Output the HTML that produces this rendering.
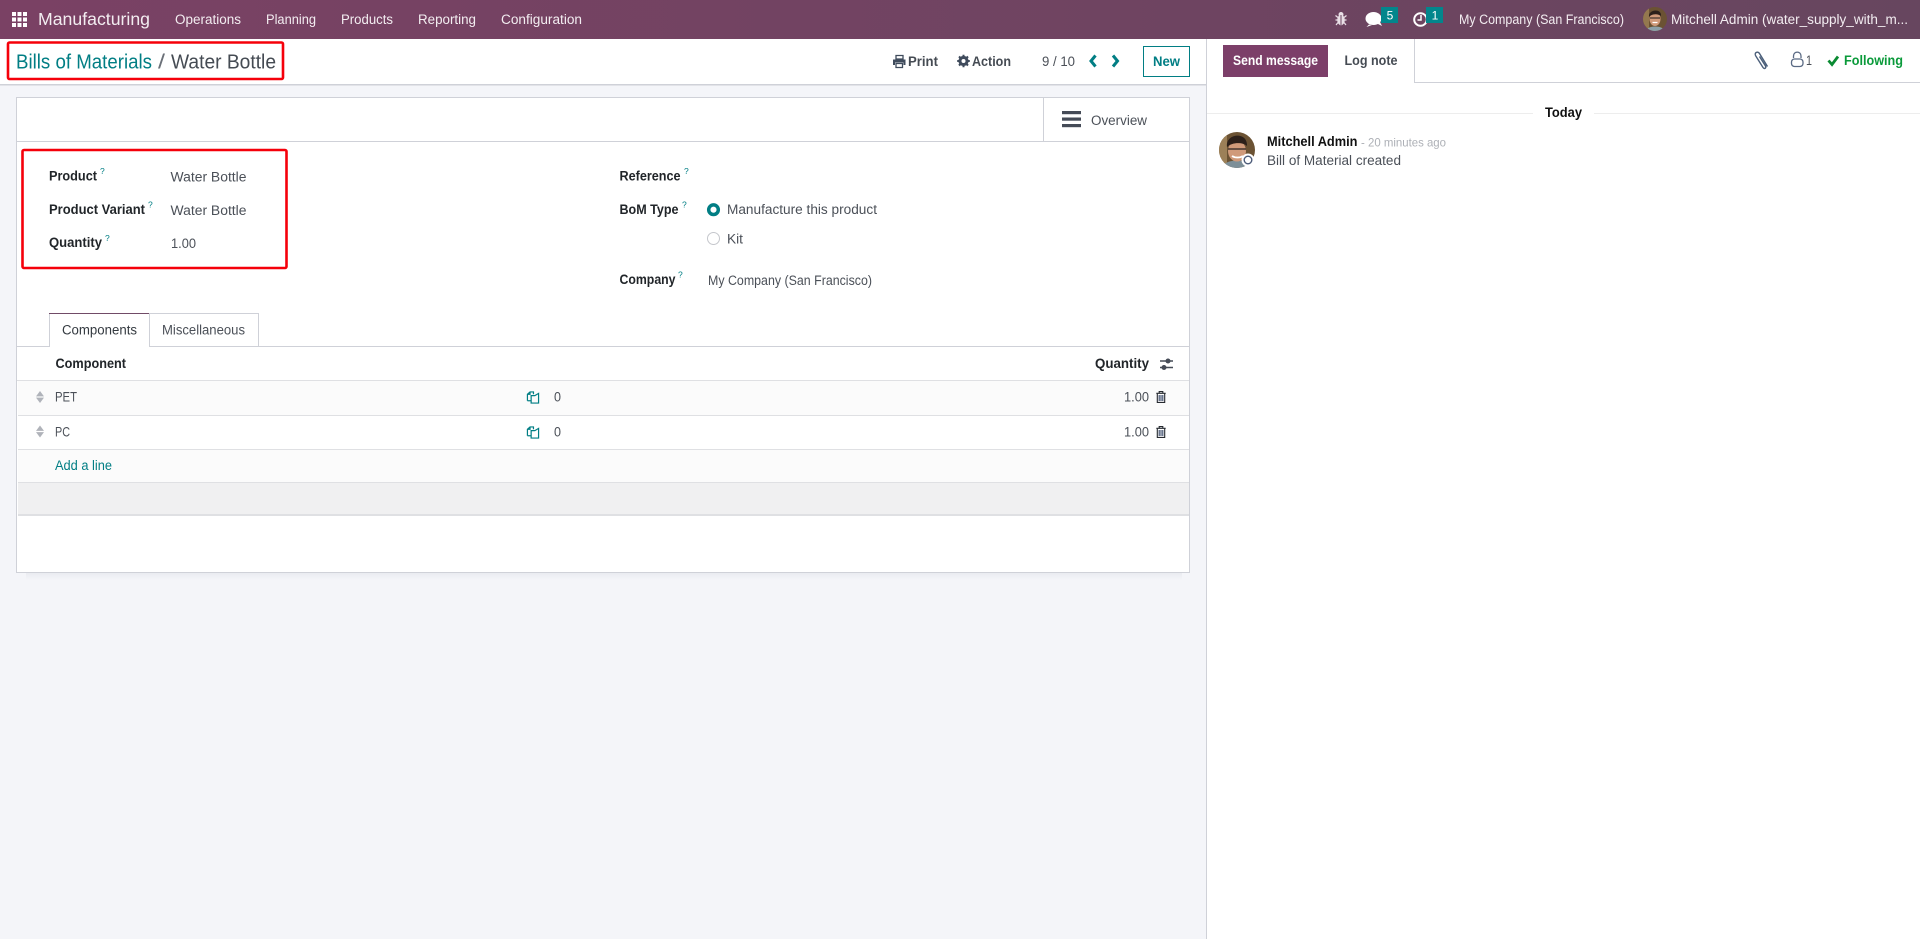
<!DOCTYPE html>
<html lang="en">
<head>
<meta charset="utf-8">
<title>Bills of Materials - Water Bottle</title>
<style>
html,body{margin:0;padding:0;width:1920px;height:939px;overflow:hidden;background:#fff}
svg{display:block}
text{font-family:"Liberation Sans",sans-serif;font-size:13.5px;fill:#4b5058;white-space:pre}
.n{fill:#f3edf1}
.b{font-weight:700;fill:#212529}
.t{fill:#017e84}
</style>
</head>
<body>
<svg width="1920" height="939" viewBox="0 0 1920 939" xmlns="http://www.w3.org/2000/svg">
<defs>
<linearGradient id="nav" x1="0" x2="1" y1="0" y2="0"><stop offset="0" stop-color="#7a4164"/><stop offset="1" stop-color="#67465f"/></linearGradient>
<linearGradient id="sh" x1="0" x2="0" y1="0" y2="1"><stop offset="0" stop-color="#dfe1e8"/><stop offset="1" stop-color="#f4f5f9"/></linearGradient>
<clipPath id="av1"><circle cx="1655" cy="19" r="12"/></clipPath>
<clipPath id="av2"><circle cx="1237" cy="150" r="18"/></clipPath>
<symbol id="copy" viewBox="0 0 14 14"><path d="M1 10.500V3.500L3.800 1H7.500V3.500M1 3.500H3.800V1M5 13V5H9L13 2.600V13Z" fill="none" stroke="#017e84" stroke-width="1.300"/><path d="M5 10.500H1" stroke="#017e84" stroke-width="1.300"/></symbol>
<symbol id="trash" viewBox="0 0 10 12"><path d="M.3 2.300H9.700M3.200 2V.6H6.800V2M1.300 2.600V11.400H8.700V2.600" fill="none" stroke="#262a30" stroke-width="1.100"/><path d="M3.200 4V10M5 4V10M6.800 4V10" stroke="#3a4a6a" stroke-width="1.100"/></symbol>
<symbol id="handle" viewBox="0 0 8 12"><path d="M4 0L8 5.400H0ZM4 12L8 6.600H0Z" fill="#b0b3ba"/></symbol>
</defs>

<!-- page -->
<rect width="1920" height="939" fill="#fff"/>
<rect x="0" y="85" width="1206" height="854" fill="#f4f5f9"/>

<!-- navbar -->
<rect width="1920" height="39" fill="url(#nav)"/>
<g fill="#fff">
<rect x="12" y="12" width="4" height="4"/><rect x="17.500" y="12" width="4" height="4"/><rect x="23" y="12" width="4" height="4"/>
<rect x="12" y="17.500" width="4" height="4"/><rect x="17.500" y="17.500" width="4" height="4"/><rect x="23" y="17.500" width="4" height="4"/>
<rect x="12" y="23" width="4" height="4"/><rect x="17.500" y="23" width="4" height="4"/><rect x="23" y="23" width="4" height="4"/>
</g>
<text class="n" x="38" y="25" style="font-size:17.500px" textLength="112" lengthAdjust="spacingAndGlyphs">Manufacturing</text>
<text class="n" x="175" y="24" textLength="66" lengthAdjust="spacingAndGlyphs">Operations</text>
<text class="n" x="266" y="24" textLength="50" lengthAdjust="spacingAndGlyphs">Planning</text>
<text class="n" x="341" y="24" textLength="52" lengthAdjust="spacingAndGlyphs">Products</text>
<text class="n" x="418" y="24" textLength="58" lengthAdjust="spacingAndGlyphs">Reporting</text>
<text class="n" x="501" y="24" textLength="81" lengthAdjust="spacingAndGlyphs">Configuration</text>

<!-- bug -->
<g fill="#e9dfe6"><ellipse cx="1341" cy="20" rx="3.800" ry="5.200"/><circle cx="1341" cy="14.500" r="2.500"/></g>
<path d="M1335.500 15.500L1338 17.500M1346.500 15.500L1344 17.500M1335.500 20H1338M1346.500 20H1344M1336 25L1338 22.500M1346 25L1344 22.500" stroke="#e9dfe6" stroke-width="1.200" fill="none"/>
<path d="M1341 15V25" stroke="#6a4560" stroke-width="1"/>
<!-- chat -->
<ellipse cx="1373.500" cy="18.500" rx="8" ry="6.500" fill="#fff"/>
<path d="M1376 23L1382 26L1379.500 21Z" fill="#fff"/>
<path d="M1369 24.500L1366.500 27L1372 25Z" fill="#fff"/>
<rect x="1381" y="7" width="17" height="16" fill="#02868c"/>
<text x="1390" y="19.500" text-anchor="middle" style="fill:#fff;font-size:12px">5</text>
<!-- clock -->
<circle cx="1420.500" cy="19.500" r="6.300" fill="none" stroke="#fff" stroke-width="2"/>
<path d="M1421 15V20H1417.500" fill="none" stroke="#fff" stroke-width="1.500"/>
<rect x="1426" y="7" width="17" height="16" fill="#02868c"/>
<text x="1435" y="19.500" text-anchor="middle" style="fill:#fff;font-size:12px">1</text>

<text class="n" x="1459" y="24" textLength="165" lengthAdjust="spacingAndGlyphs">My Company (San Francisco)</text>
<g clip-path="url(#av1)">
<rect x="1643" y="7" width="24" height="24" fill="#6b5233"/>
<rect x="1643" y="7" width="6" height="24" fill="#94784f"/>
<path d="M1646 31C1647 25 1663 25 1665 31Z" fill="#8da0a8"/>
<ellipse cx="1655" cy="19" rx="5.500" ry="7" fill="#d09a7a"/>
<path d="M1649 17C1648 9 1662 8 1661 16C1658 13.500 1652 13.500 1649 17Z" fill="#2c201a"/>
<path d="M1650 18H1660" stroke="#45362f" stroke-width="1.200"/>
<path d="M1652.500 22.500H1657.500" stroke="#fff" stroke-width="1.200"/>
</g>
<text class="n" x="1671" y="24" textLength="237" lengthAdjust="spacingAndGlyphs">Mitchell Admin (water_supply_with_m...</text>

<!-- control panel -->
<rect x="0" y="39" width="1206" height="45" fill="#fff"/>
<rect x="0" y="84" width="1206" height="1.500" fill="#cfd1d8"/>
<text class="t" x="16" y="68.700" style="font-size:20px" textLength="136" lengthAdjust="spacingAndGlyphs">Bills of Materials</text>
<text x="158" y="68.700" style="font-size:20px;fill:#6b7078" textLength="7" lengthAdjust="spacingAndGlyphs">/</text>
<text x="171" y="68.700" style="font-size:20px;fill:#454b53" textLength="105" lengthAdjust="spacingAndGlyphs">Water Bottle</text>
<rect x="8" y="42.500" width="275" height="36.500" rx="1.500" fill="none" stroke="#f5000a" stroke-width="2.600"/>

<!-- print -->
<g fill="#3f4b5c">
<path d="M896 55.500H903V59H896Z" fill="none" stroke="#3f4b5c" stroke-width="1.300"/>
<path d="M893 59.500H905.500V65H903.500V62.500H895V65H893Z"/>
<path d="M896 63.500H902.500V67.500H896Z" fill="none" stroke="#3f4b5c" stroke-width="1.300"/>
</g>
<text x="908" y="66" style="font-weight:700;fill:#454b53" textLength="30" lengthAdjust="spacingAndGlyphs">Print</text>
<!-- gear -->
<circle cx="963.500" cy="61" r="3.700" fill="none" stroke="#3f4b5c" stroke-width="2.800"/>
<path d="M963.500 54.700V67.300M957.200 61H969.800M959 56.500L968 65.500M968 56.500L959 65.500" stroke="#3f4b5c" stroke-width="2"/>
<circle cx="963.500" cy="61" r="2" fill="#fff"/>
<text x="972" y="66" style="font-weight:700;fill:#454b53" textLength="39" lengthAdjust="spacingAndGlyphs">Action</text>
<text x="1042" y="66" textLength="33" lengthAdjust="spacingAndGlyphs">9 / 10</text>
<path d="M1095.500 55.500L1091 61L1095.500 66.500" fill="none" stroke="#017e84" stroke-width="3"/>
<path d="M1113 55.500L1117.500 61L1113 66.500" fill="none" stroke="#017e84" stroke-width="3"/>
<rect x="1143.500" y="46.500" width="46" height="30" fill="#fff" stroke="#017e84" stroke-width="1"/>
<text class="t" x="1153" y="66" style="font-weight:700" textLength="27" lengthAdjust="spacingAndGlyphs">New</text>

<!-- sheet -->
<rect x="26" y="566" width="1156" height="14" fill="url(#sh)"/>
<rect x="16.500" y="97.500" width="1173" height="475" fill="#fff" stroke="#cfd1d8" stroke-width="1"/>
<rect x="17" y="141" width="1172" height="1" fill="#cfd1d8"/>
<rect x="1043" y="98" width="1" height="43" fill="#cfd1d8"/>
<g fill="#454b57"><rect x="1062" y="111" width="19" height="3.200"/><rect x="1062" y="117.500" width="19" height="3.200"/><rect x="1062" y="124" width="19" height="3.200"/></g>
<text x="1091" y="125" textLength="56" lengthAdjust="spacingAndGlyphs">Overview</text>

<!-- left form group -->
<rect x="22.500" y="150" width="264" height="118" rx="1.500" fill="none" stroke="#f5000a" stroke-width="2.600"/>
<text class="b" x="49" y="180.500" textLength="48" lengthAdjust="spacingAndGlyphs">Product</text>
<text class="t" x="100" y="174" style="font-size:8.500px">?</text>
<text class="b" x="49" y="214" textLength="96" lengthAdjust="spacingAndGlyphs">Product Variant</text>
<text class="t" x="148" y="207.500" style="font-size:8.500px">?</text>
<text class="b" x="49" y="247" textLength="53" lengthAdjust="spacingAndGlyphs">Quantity</text>
<text class="t" x="105" y="241" style="font-size:8.500px">?</text>
<text x="170.500" y="181.300" textLength="76" lengthAdjust="spacingAndGlyphs">Water Bottle</text>
<text x="170.500" y="215" textLength="76" lengthAdjust="spacingAndGlyphs">Water Bottle</text>
<text x="171" y="248" textLength="25" lengthAdjust="spacingAndGlyphs">1.00</text>

<!-- right form group -->
<text class="b" x="619.500" y="180.500" textLength="61" lengthAdjust="spacingAndGlyphs">Reference</text>
<text class="t" x="684" y="174" style="font-size:8.500px">?</text>
<text class="b" x="619.500" y="214" textLength="59" lengthAdjust="spacingAndGlyphs">BoM Type</text>
<text class="t" x="682" y="207.500" style="font-size:8.500px">?</text>
<text class="b" x="619.500" y="284" textLength="56" lengthAdjust="spacingAndGlyphs">Company</text>
<text class="t" x="678" y="277.500" style="font-size:8.500px">?</text>
<circle cx="713.500" cy="209.700" r="4.800" fill="#fff" stroke="#017e84" stroke-width="3.500"/>
<circle cx="713.500" cy="238.500" r="6" fill="#fff" stroke="#c5c7cc" stroke-width="1"/>
<text x="727" y="214" textLength="150" lengthAdjust="spacingAndGlyphs">Manufacture this product</text>
<text x="727" y="243.500" textLength="16" lengthAdjust="spacingAndGlyphs">Kit</text>
<text x="708" y="285" textLength="164" lengthAdjust="spacingAndGlyphs">My Company (San Francisco)</text>

<!-- tabs -->
<rect x="17" y="346" width="1172" height="1" fill="#cfd1d8"/>
<path d="M49.500 347V313.500H149.500V347" fill="#fff" stroke="#cfd1d8" stroke-width="1"/>
<rect x="49" y="313" width="101" height="1" fill="#714b67"/>
<rect x="50" y="346" width="99" height="1" fill="#fff"/>
<path d="M149.500 346V313.500H258.500V346" fill="none" stroke="#cfd1d8" stroke-width="1"/>
<text x="62" y="334.300" style="fill:#343a40" textLength="75" lengthAdjust="spacingAndGlyphs">Components</text>
<text x="162" y="334.300" textLength="83" lengthAdjust="spacingAndGlyphs">Miscellaneous</text>

<!-- table -->
<text class="b" x="55.500" y="368" textLength="70.500" lengthAdjust="spacingAndGlyphs">Component</text>
<text class="b" x="1095" y="368" textLength="54" lengthAdjust="spacingAndGlyphs">Quantity</text>
<path d="M1160 361H1173M1160 367.500H1173" stroke="#454b57" stroke-width="1.500"/>
<circle cx="1168" cy="361" r="2.500" fill="#454b57"/><circle cx="1164" cy="367.500" r="2.500" fill="#454b57"/>
<rect x="17" y="380" width="1172" height="1" fill="#dfe0e3"/>
<rect x="18" y="381" width="1171" height="34" fill="#fbfbfb"/>
<rect x="18" y="415" width="1171" height="1" fill="#dfe0e3"/>
<rect x="18" y="449" width="1171" height="1" fill="#dfe0e3"/>
<rect x="18" y="450" width="1171" height="32" fill="#fbfbfb"/>
<rect x="18" y="482" width="1171" height="1" fill="#dfe0e3"/>
<rect x="18" y="483" width="1171" height="31" fill="#f0f0f1"/>
<rect x="18" y="514" width="1171" height="2" fill="#dfe0e3"/>

<use href="#handle" x="36" y="391" width="8" height="12"/>
<use href="#handle" x="36" y="425.500" width="8" height="12"/>
<text x="55" y="401.300" style="font-size:14px" textLength="22" lengthAdjust="spacingAndGlyphs">PET</text>
<text x="55" y="436.300" style="font-size:14px" textLength="15" lengthAdjust="spacingAndGlyphs">PC</text>
<use href="#copy" x="526" y="391" width="14" height="13"/>
<use href="#copy" x="526" y="426" width="14" height="13"/>
<text x="554" y="401.300" textLength="7" lengthAdjust="spacingAndGlyphs">0</text>
<text x="554" y="436.300" textLength="7" lengthAdjust="spacingAndGlyphs">0</text>
<text x="1124" y="401.300" textLength="25" lengthAdjust="spacingAndGlyphs">1.00</text>
<text x="1124" y="436.300" textLength="25" lengthAdjust="spacingAndGlyphs">1.00</text>
<use href="#trash" x="1156" y="391" width="10" height="12"/>
<use href="#trash" x="1156" y="426" width="10" height="12"/>
<text class="t" x="55" y="470" textLength="57" lengthAdjust="spacingAndGlyphs">Add a line</text>

<!-- chatter -->
<rect x="1206" y="39" width="1" height="900" fill="#cfd1d8"/>
<rect x="1223" y="45" width="105" height="32" fill="#7c3f69"/>
<text x="1233" y="65" style="font-weight:700;fill:#fff" textLength="85" lengthAdjust="spacingAndGlyphs">Send message</text>
<text x="1344.500" y="65" style="font-weight:700;fill:#454b53" textLength="53" lengthAdjust="spacingAndGlyphs">Log note</text>
<path d="M1414.500 39V82.500H1920" fill="none" stroke="#cfd1d8" stroke-width="1"/>
<!-- paperclip -->
<path d="M1767.500 66.500L1759.500 53.500C1757.500 50.500 1753.800 53 1755.800 56L1763 67.500C1764.500 69.500 1766.500 68 1765.500 66L1759.500 56.500" fill="none" stroke="#4b5f7a" stroke-width="1.400"/>
<!-- person -->
<path d="M1793.500 58V56C1793.500 50.800 1801 50.800 1801 56V58" fill="none" stroke="#5a6a84" stroke-width="1.300"/>
<rect x="1791.500" y="59" width="11.500" height="7.500" rx="3" fill="none" stroke="#5a6a84" stroke-width="1.300"/>
<text x="1806" y="65" style="fill:#4b5058" textLength="6" lengthAdjust="spacingAndGlyphs">1</text>
<path d="M1828.500 60.500L1832 64.500L1838 56.500" fill="none" stroke="#0a8a32" stroke-width="2.800"/>
<text x="1844" y="65" style="font-weight:700;fill:#0a9a3a" textLength="59" lengthAdjust="spacingAndGlyphs">Following</text>

<rect x="1207" y="113" width="326" height="1" fill="#ededed"/>
<rect x="1594" y="113" width="326" height="1" fill="#ededed"/>
<text x="1545" y="117" style="font-weight:700;fill:#111" textLength="37" lengthAdjust="spacingAndGlyphs">Today</text>

<g clip-path="url(#av2)">
<rect x="1219" y="132" width="36" height="36" fill="#6b5233"/>
<rect x="1219" y="132" width="8" height="36" fill="#9c8058"/>
<path d="M1222 168C1224 158 1250 158 1253 168Z" fill="#7d8f98"/>
<ellipse cx="1237" cy="151" rx="9" ry="10.500" fill="#d09a7a"/>
<path d="M1227 147C1225 133 1248 131 1247 146C1243 142 1232 142 1227 147Z" fill="#2c201a"/>
<path d="M1228 149H1246" stroke="#45362f" stroke-width="1.500"/>
<path d="M1232 156C1235 158 1240 158 1243 156" stroke="#fff" stroke-width="1.800" fill="none"/>
</g>
<circle cx="1248" cy="160" r="6.500" fill="#fff"/>
<circle cx="1248" cy="160" r="3.800" fill="#fff" stroke="#4b5a78" stroke-width="1.400"/>
<text class="b" x="1267" y="146" style="fill:#111" textLength="90.500" lengthAdjust="spacingAndGlyphs">Mitchell Admin</text>
<text x="1361" y="146.500" style="font-size:12px;fill:#adb0b6" textLength="85" lengthAdjust="spacingAndGlyphs">- 20 minutes ago</text>
<text x="1267" y="165" textLength="134" lengthAdjust="spacingAndGlyphs">Bill of Material created</text>
</svg>
</body>
</html>
